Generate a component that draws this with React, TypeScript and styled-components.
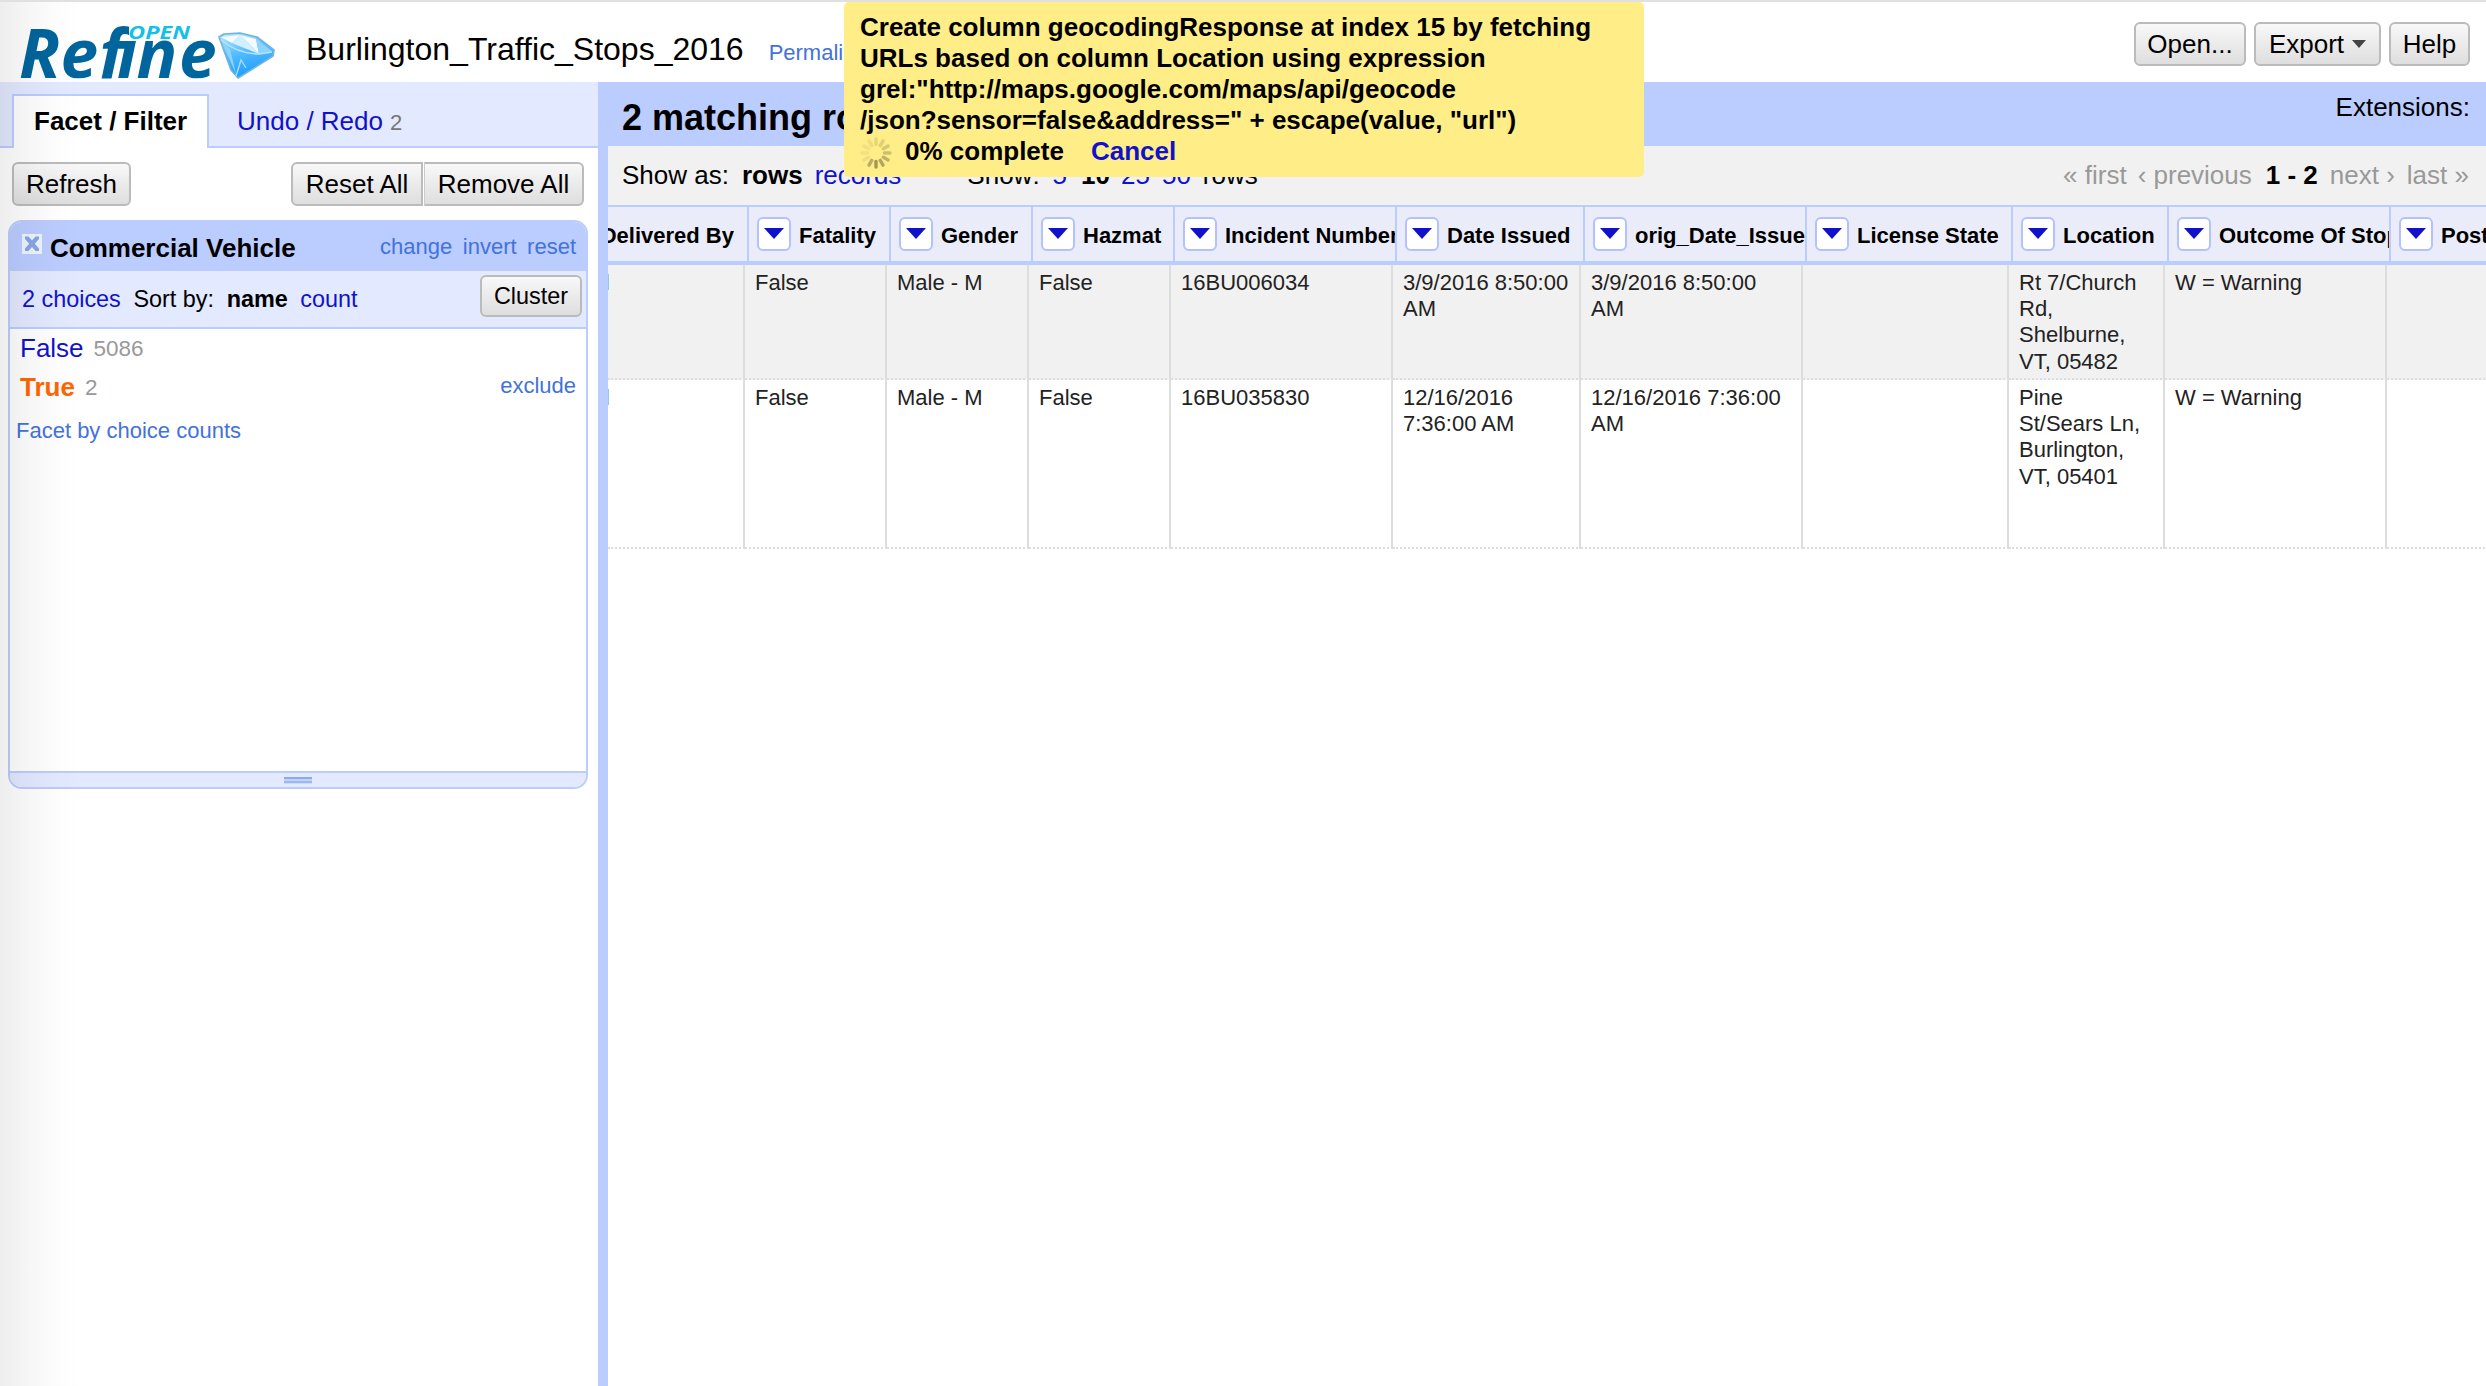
import React from "react";
import styled, { createGlobalStyle, css } from "styled-components";

const BLUE = "#bbccff";
const PALE = "#e3e9ff";
const LINK = "#1111cc";
const SOFT_LINK = "#4272db";

const GlobalStyle = createGlobalStyle`
  * { box-sizing: border-box; }
  html, body { margin: 0; padding: 0; background: #fff; }
  body {
    font-family: "Liberation Sans", Arial, sans-serif;
    font-size: 26px;
    line-height: 30px;
    color: #000;
    overflow: hidden;
  }
`;

const Page = styled.div`
  position: relative;
  display: flex;
  flex-direction: column;
  width: 2486px;
  height: 1386px;
  overflow: hidden;
`;

const EdgeShade = styled.div`
  position: absolute;
  left: 0;
  top: 2px;
  bottom: 0;
  width: 84px;
  pointer-events: none;
  background: linear-gradient(to right, rgba(0, 0, 0, 0.07), rgba(0, 0, 0, 0.045) 25%, rgba(0, 0, 0, 0.012) 65%, rgba(0, 0, 0, 0));
`;

/* ---------- header ---------- */

const Header = styled.header`
  display: flex;
  align-items: flex-start;
  height: 82px;
  flex: none;
  border-top: 2px solid #e0e0e0;
  padding: 0 16px 0 16px;
`;

const Logo = styled.svg`
  width: 264px;
  height: 80px;
  flex: none;
`;

const ProjectName = styled.h1`
  margin: 29px 0 0 26px;
  font-size: 32px;
  line-height: 36px;
  font-weight: normal;
`;

const Permalink = styled.a`
  margin: 38px 0 0 25px;
  font-size: 22px;
  line-height: 26px;
  color: ${SOFT_LINK};
`;

const HeaderActions = styled.div`
  display: flex;
  gap: 8px;
  margin: 20px 0 0 auto;
`;

const Button = styled.button<{ $w: number; $small?: boolean; $join?: "left" | "right" }>`
  display: flex;
  align-items: center;
  justify-content: center;
  flex: none;
  width: ${(p) => p.$w}px;
  height: ${(p) => (p.$small ? 42 : 44)}px;
  padding: 0 0 1px 0;
  font: ${(p) => (p.$small ? "23.4px" : "26px")}/30px "Liberation Sans", Arial, sans-serif;
  color: #000;
  border: 2px solid #bbb;
  border-radius: 6px;
  background: linear-gradient(#f8f8f8, #dedede);
  ${(p) => p.$join === "left" && css`border-radius: 6px 0 0 6px;`}
  ${(p) => p.$join === "right" && css`
    border-radius: 0 6px 6px 0;
    border-left: 1px solid #ccc;
    margin-left: 1px;
  `}
`;

const Caret = styled.span`
  width: 0;
  height: 0;
  margin: 1px 0 0 8px;
  border: 7px solid transparent;
  border-bottom: 0;
  border-top: 8px solid #444;
`;

/* ---------- body ---------- */

const Body = styled.div`
  display: flex;
  flex: 1;
  min-height: 0;
`;

const LeftPanel = styled.aside`
  width: 598px;
  flex: none;
`;

const Tabs = styled.nav`
  display: flex;
  height: 66px;
  padding: 12px 0 0 12px;
  background: linear-gradient(${BLUE}, ${BLUE}) bottom / 100% 2px no-repeat ${PALE};
`;

const Tab = styled.div<{ $active?: boolean }>`
  height: 54px;
  ${(p) =>
    p.$active
      ? css`
          width: 197px;
          padding: 10px 0 0 20px;
          font-weight: bold;
          background: #fff;
          border: 2px solid ${BLUE};
          border-bottom: 0;
        `
      : css`
          padding: 12px 0 0 28px;
          color: ${LINK};
        `}
`;

const UndoCount = styled.span`
  margin-left: 7px;
  font-size: 22px;
  color: #777;
`;

const FacetToolbar = styled.div`
  display: flex;
  padding: 14px 14px 0 12px;
`;

const ButtonPair = styled.div`
  display: flex;
  margin-left: auto;
`;

const Facet = styled.section`
  display: flex;
  flex-direction: column;
  width: 580px;
  height: 569px;
  margin: 14px 0 0 8px;
  border: 2px solid ${BLUE};
  border-radius: 14px;
  overflow: hidden;
`;

const FacetTitle = styled.div`
  display: flex;
  align-items: flex-start;
  height: 49px;
  flex: none;
  padding: 0 10px 0 12px;
  background: ${BLUE};
  font-weight: bold;
`;

const CloseIcon = styled.svg`
  width: 20px;
  height: 20px;
  margin: 12px 8px 0 0;
`;

const FacetName = styled.span`
  margin-top: 11px;
`;

const FacetLinks = styled.span`
  display: flex;
  gap: 10.5px;
  margin: 12px 0 0 auto;
  font-size: 22px;
  line-height: 26px;
  font-weight: normal;
  color: ${SOFT_LINK};
`;

const FacetControls = styled.div`
  display: flex;
  align-items: flex-start;
  height: 58px;
  flex: none;
  padding: 4px 4px 0 12px;
  font-size: 23.4px;
  background: ${PALE};
  border-bottom: 2px solid ${BLUE};
`;

const Control = styled.span<{ $link?: boolean; $bold?: boolean }>`
  margin: 9px 12.6px 0 0;
  color: ${(p) => (p.$link ? LINK : "#000")};
  font-weight: ${(p) => (p.$bold ? "bold" : "normal")};
`;

const Push = styled.span`
  margin-left: auto;
`;

const Choices = styled.div`
  flex: 1;
  padding: 4px 10px 0 10px;
`;

const Choice = styled.div<{ $selected?: boolean }>`
  display: flex;
  height: 39px;
  color: ${(p) => (p.$selected ? "#ff6600" : LINK)};
  font-weight: ${(p) => (p.$selected ? "bold" : "normal")};
`;

const ChoiceCount = styled.span`
  margin-left: 10px;
  font-size: 22.5px;
  line-height: 32px;
  font-weight: normal;
  color: #999;
`;

const Exclude = styled.a`
  margin: 1px 0 0 auto;
  font-size: 22px;
  line-height: 26px;
  font-weight: normal;
  color: ${SOFT_LINK};
`;

const ByCounts = styled.a`
  display: block;
  margin: 7px 0 0 -4px;
  font-size: 22px;
  line-height: 26px;
  color: ${SOFT_LINK};
`;

const ResizeBar = styled.div`
  display: flex;
  justify-content: center;
  height: 16px;
  padding-top: 4px;
  background: ${PALE};
  border-top: 2px solid ${BLUE};
`;

const Grip = styled.span`
  width: 28px;
  height: 7px;
  background: linear-gradient(#8aabeb 2px, #c4d3fb 2px, #c4d3fb 4px, #9db7f0 4px, #9db7f0 6px, #ccd9fc 6px);
`;

/* ---------- data view ---------- */

const RightPanel = styled.main`
  flex: 1;
  min-width: 0;
  border-left: 10px solid ${BLUE};
`;

const SummaryBar = styled.div`
  display: flex;
  justify-content: space-between;
  height: 64px;
  padding: 15px 16px 0 14px;
  background: ${BLUE};
`;

const Summary = styled.h2`
  margin: 0;
  font-size: 36px;
  line-height: 41px;
`;

const Extensions = styled.div`
  margin-top: -5px;
`;

const ViewBar = styled.div`
  display: flex;
  height: 59px;
  padding: 14px 17px 0 14px;
  background: #f1f1f1;
`;

const ViewItem = styled.span<{ $tone?: string; $bold?: boolean; $gap?: number }>`
  margin-right: ${(p) => p.$gap ?? 0}px;
  color: ${(p) => p.$tone ?? "#000"};
  font-weight: ${(p) => (p.$bold ? "bold" : "normal")};
  white-space: pre;
`;

const ColumnHeads = styled.div`
  display: flex;
  height: 60px;
  border-top: 2px solid ${BLUE};
  border-bottom: 4px solid ${BLUE};
  background: #eaedf9;
  font-size: 22px;
  line-height: 26px;
  font-weight: bold;
`;

const ColumnHead = styled.div<{ $w: number; $clipLeft?: boolean }>`
  display: flex;
  align-items: flex-start;
  flex: none;
  width: ${(p) => p.$w}px;
  padding: 10px 0 0 8px;
  border-right: 2px solid ${BLUE};
  overflow: hidden;
  white-space: nowrap;
  ${(p) => p.$clipLeft && css`
    justify-content: flex-end;
    padding: 10px 13px 0 0;
  `}
`;

const MenuButton = styled.span`
  display: flex;
  justify-content: center;
  flex: none;
  width: 34px;
  height: 34px;
  margin-right: 8px;
  padding-top: 9px;
  background: #fff;
  border: 2px solid #b3c1ff;
  border-radius: 6px;
`;

const MenuArrow = styled.span`
  width: 0;
  height: 0;
  border: 10px solid transparent;
  border-bottom: 0;
  border-top: 11px solid ${LINK};
`;

const HeadLabel = styled.span`
  margin-top: 6px;
`;

const Row = styled.div<{ $h: number; $odd?: boolean }>`
  display: flex;
  height: ${(p) => p.$h}px;
  background: ${(p) => (p.$odd ? "#f1f1f1" : "#fff")};
  font-size: 22px;
  line-height: 26.4px;
  color: #222;
`;

const Cell = styled.div<{ $w: number }>`
  flex: none;
  width: ${(p) => p.$w}px;
  padding: 4.6px 10px 0 10px;
  border-right: 2px solid #ddd;
  border-bottom: 2px dotted #ddd;
`;

const ClippedLink = styled.div`
  width: 1px;
  height: 16px;
  margin: 4px 0 0 -10px;
  background: #8fcbea;
`;

/* ---------- progress notification ---------- */

const Notification = styled.div`
  position: absolute;
  left: 844px;
  top: 2px;
  width: 800px;
  height: 175px;
  padding: 10px 16px 0;
  background: #ffed88;
  border-radius: 5px;
  font-weight: bold;
  line-height: 31px;
  white-space: pre;
`;

const Progress = styled.div`
  display: flex;
  height: 31px;
`;

const SpinnerIcon = styled.svg`
  width: 32px;
  height: 32px;
  margin: 1px 13px 0 0;
  overflow: visible;
`;

const Cancel = styled.a`
  margin-left: 27px;
  color: ${LINK};
`;

type Column = { name: string; width: number; rows: [string, string] };

const columns: Column[] = [
  { name: "Fatality", width: 142, rows: ["False", "False"] },
  { name: "Gender", width: 142, rows: ["Male - M", "Male - M"] },
  { name: "Hazmat", width: 142, rows: ["False", "False"] },
  { name: "Incident Number", width: 222, rows: ["16BU006034", "16BU035830"] },
  { name: "Date Issued", width: 188, rows: ["3/9/2016 8:50:00 AM", "12/16/2016 7:36:00 AM"] },
  { name: "orig_Date_Issued", width: 222, rows: ["3/9/2016 8:50:00 AM", "12/16/2016 7:36:00 AM"] },
  { name: "License State", width: 206, rows: ["", ""] },
  {
    name: "Location",
    width: 156,
    rows: ["Rt 7/Church Rd, Shelburne, VT, 05482", "Pine St/Sears Ln, Burlington, VT, 05401"],
  },
  { name: "Outcome Of Stop", width: 222, rows: ["W = Warning", "W = Warning"] },
  { name: "Postal", width: 222, rows: ["", ""] },
];

const RefineLogo = () => (
  <Logo viewBox="16 2 264 80">
    <defs>
      <linearGradient id="gem" x1="0" y1="0" x2="0.3" y2="1">
        <stop offset="0" stopColor="#c4ecff" />
        <stop offset="0.5" stopColor="#55bdff" />
        <stop offset="1" stopColor="#1e9dff" />
      </linearGradient>
      {/* trims the dot of the i, where OPEN sits, and the tail of the f */}
      <clipPath id="wordmark">
        <path d="M0 0 H129 V38 H290 V78.5 H0 Z" />
      </clipPath>
    </defs>
    <g clipPath="url(#wordmark)">
      <text
        x="19 60.5 99 117 136.5 179"
        y="77.5"
        fontFamily="Open Sans, Noto Sans, sans-serif"
        fontStyle="italic"
        fontWeight="700"
        fontSize="67.5"
        fill="#00659c"
      >
        Refine
      </text>
    </g>
    <text
      x="128"
      y="38.5"
      textLength="62"
      lengthAdjust="spacingAndGlyphs"
      fontFamily="Open Sans, Noto Sans, sans-serif"
      fontStyle="italic"
      fontWeight="700"
      fontSize="18.5"
      fill="#16bfe6"
    >
      OPEN
    </text>
    <path d="M219 37 L224 34 L240 33 L257 37 L274 50 L273 56 L238 78 L231 70 Z" fill="url(#gem)" stroke="#6fb4da" strokeWidth="1.6" strokeLinejoin="round" />
    <path d="M221 37 L240 35 L232 43 Z M240 35 L256 39 L259 54 Z" fill="#f3fbff" />
    <path d="M232 43 L240 35 L259 54 Z" fill="#d3f0ff" />
    <path d="M256 39 L272 51 L259 54 Z" fill="#8fd4ff" />
    <path d="M221 40 Q238 54 259 54 L272 52" fill="none" stroke="#b7e4ff" strokeWidth="1.6" />
    <path d="M236 76 L241 60 L246 68" fill="none" stroke="#a5dcff" strokeWidth="1.4" />
    <path d="M222 42 L230 49 L236 74 Z" fill="#8ed3fb" />
  </Logo>
);

const spokes = [0.2, 0.26, 0.32, 0.4, 0.5, 0.62, 0.75, 0.55, 0.12, 0.1, 0.1, 0.14];

const Spinner = () => (
  <SpinnerIcon viewBox="-16 -16 32 32">
    {spokes.map((opacity, i) => (
      <line
        key={i}
        x1="0"
        y1="-8.5"
        x2="0"
        y2="-14"
        transform={`rotate(${i * 30})`}
        stroke="#857b46"
        strokeWidth="3.4"
        strokeLinecap="round"
        opacity={opacity}
      />
    ))}
  </SpinnerIcon>
);

const DataRow = ({ index, height }: { index: 0 | 1; height: number }) => (
  <Row $h={height} $odd={index === 0}>
    <Cell $w={137}>
      <ClippedLink />
    </Cell>
    {columns.map((c) => (
      <Cell key={c.name} $w={c.width}>
        {c.rows[index]}
      </Cell>
    ))}
  </Row>
);

export default function App() {
  return (
    <Page>
      <GlobalStyle />
      <Header>
        <RefineLogo />
        <ProjectName>Burlington_Traffic_Stops_2016</ProjectName>
        <Permalink>Permalink</Permalink>
        <HeaderActions>
          <Button $w={112}>Open...</Button>
          <Button $w={127}>
            Export
            <Caret />
          </Button>
          <Button $w={81}>Help</Button>
        </HeaderActions>
      </Header>

      <Body>
        <LeftPanel>
          <Tabs>
            <Tab $active>Facet / Filter</Tab>
            <Tab>
              Undo / Redo
              <UndoCount>2</UndoCount>
            </Tab>
          </Tabs>
          <FacetToolbar>
            <Button $w={119}>Refresh</Button>
            <ButtonPair>
              <Button $w={132} $join="left">Reset All</Button>
              <Button $w={160} $join="right">Remove All</Button>
            </ButtonPair>
          </FacetToolbar>
          <Facet>
            <FacetTitle>
              <CloseIcon viewBox="0 0 20 20">
                <rect width="20" height="20" fill="#eff3fd" />
                <path d="M3 2.5 L6.5 2.5 L10 6.5 L13.5 2.5 L17 2.5 L17 5 L12.8 9.8 L17 14.5 L17 17 L13.5 17 L10 13 L6.5 17 L3 17 L3 14.5 L7.2 9.8 L3 5 Z" fill="#86a6e8" />
              </CloseIcon>
              <FacetName>Commercial Vehicle</FacetName>
              <FacetLinks>
                <span>change</span>
                <span>invert</span>
                <span>reset</span>
              </FacetLinks>
            </FacetTitle>
            <FacetControls>
              <Control $link>2 choices</Control>
              <Control>Sort by:</Control>
              <Control $bold>name</Control>
              <Control $link>count</Control>
              <Push>
                <Button $w={102} $small>Cluster</Button>
              </Push>
            </FacetControls>
            <Choices>
              <Choice>
                False
                <ChoiceCount>5086</ChoiceCount>
              </Choice>
              <Choice $selected>
                True
                <ChoiceCount>2</ChoiceCount>
                <Exclude>exclude</Exclude>
              </Choice>
              <ByCounts>Facet by choice counts</ByCounts>
            </Choices>
            <ResizeBar>
              <Grip />
            </ResizeBar>
          </Facet>
        </LeftPanel>

        <RightPanel>
          <SummaryBar>
            <Summary>2 matching rows</Summary>
            <Extensions>Extensions:</Extensions>
          </SummaryBar>
          <ViewBar>
            <ViewItem $gap={13}>Show as:</ViewItem>
            <ViewItem $gap={12} $bold>rows</ViewItem>
            <ViewItem $gap={66} $tone={LINK}>records</ViewItem>
            <ViewItem $gap={13}>Show:</ViewItem>
            <ViewItem $gap={14} $tone={LINK}>5</ViewItem>
            <ViewItem $gap={11} $bold>10</ViewItem>
            <ViewItem $gap={12} $tone={LINK}>25</ViewItem>
            <ViewItem $gap={12} $tone={LINK}>50</ViewItem>
            <ViewItem>rows</ViewItem>
            <Push />
            <ViewItem $gap={11} $tone="#999">« first</ViewItem>
            <ViewItem $gap={14} $tone="#999">‹ previous</ViewItem>
            <ViewItem $gap={12} $bold>1 - 2</ViewItem>
            <ViewItem $gap={12} $tone="#999">next ›</ViewItem>
            <ViewItem $tone="#999">last »</ViewItem>
          </ViewBar>
          <ColumnHeads>
            <ColumnHead $w={141} $clipLeft>
              <HeadLabel>Delivered By</HeadLabel>
            </ColumnHead>
            {columns.map((c) => (
              <ColumnHead key={c.name} $w={c.width}>
                <MenuButton>
                  <MenuArrow />
                </MenuButton>
                <HeadLabel>{c.name}</HeadLabel>
              </ColumnHead>
            ))}
          </ColumnHeads>
          <DataRow index={0} height={115} />
          <DataRow index={1} height={169} />
        </RightPanel>
      </Body>

      <EdgeShade />

      <Notification>
        {"Create column geocodingResponse at index 15 by fetching\nURLs based on column Location using expression\ngrel:\"http://maps.google.com/maps/api/geocode\n/json?sensor=false&address=\" + escape(value, \"url\")"}
        <Progress>
          <Spinner />
          0% complete
          <Cancel>Cancel</Cancel>
        </Progress>
      </Notification>
    </Page>
  );
}
